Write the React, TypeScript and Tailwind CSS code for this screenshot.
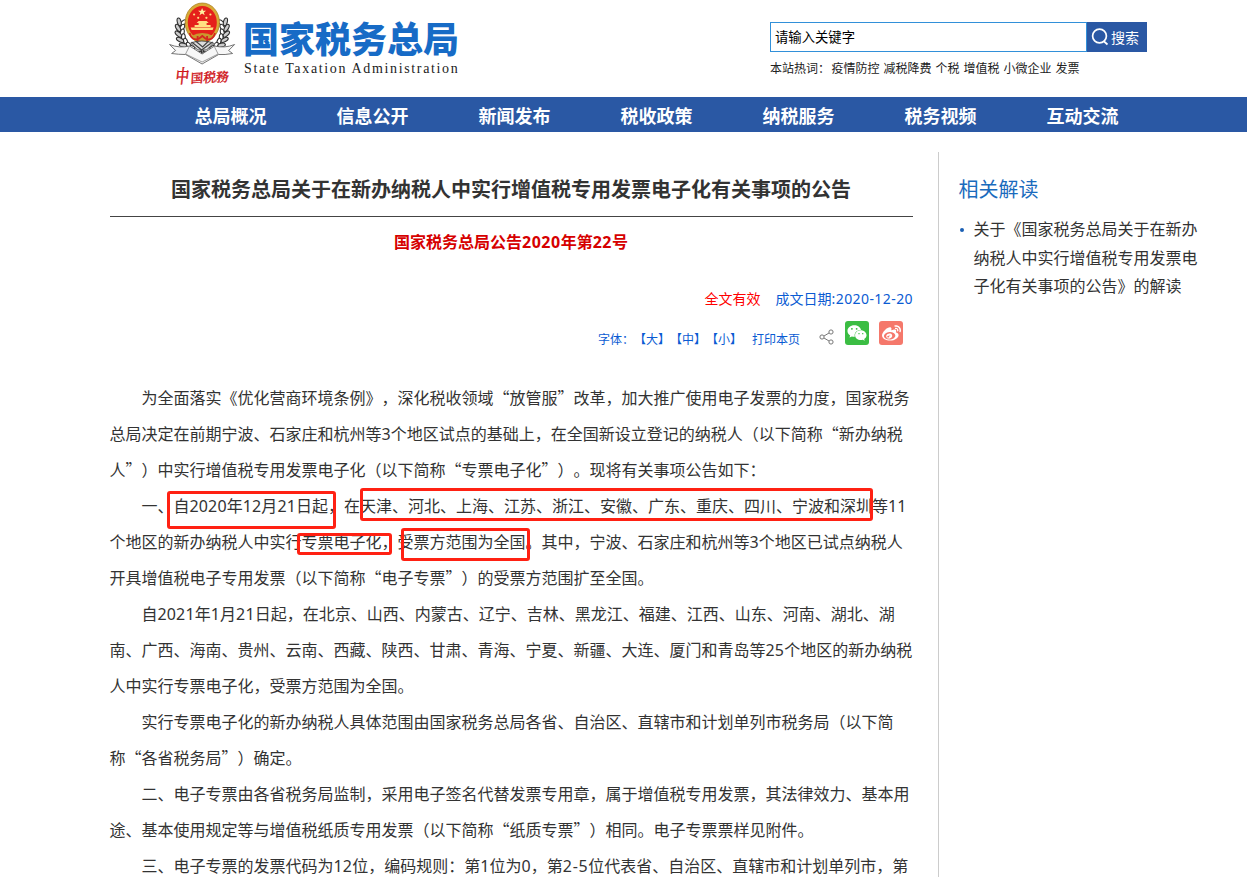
import React from "react";
import { FaWeibo, FaWeixin } from "react-icons/fa";

const navItems = ["总局概况", "信息公开", "新闻发布", "税收政策", "纳税服务", "税务视频", "互动交流"];
const hotWords = ["疫情防控", "减税降费", "个税", "增值税", "小微企业", "发票"];

const lines: { text: string; indent?: boolean }[] = [
  { text: "为全面落实《优化营商环境条例》，深化税收领域“放管服”改革，加大推广使用电子发票的力度，国家税务", indent: true },
  { text: "总局决定在前期宁波、石家庄和杭州等3个地区试点的基础上，在全国新设立登记的纳税人（以下简称“新办纳税" },
  { text: "人”）中实行增值税专用发票电子化（以下简称“专票电子化”）。现将有关事项公告如下：" },
  { text: "一、自2020年12月21日起，在天津、河北、上海、江苏、浙江、安徽、广东、重庆、四川、宁波和深圳等11", indent: true },
  { text: "个地区的新办纳税人中实行专票电子化，受票方范围为全国。其中，宁波、石家庄和杭州等3个地区已试点纳税人" },
  { text: "开具增值税电子专用发票（以下简称“电子专票”）的受票方范围扩至全国。" },
  { text: "自2021年1月21日起，在北京、山西、内蒙古、辽宁、吉林、黑龙江、福建、江西、山东、河南、湖北、湖", indent: true },
  { text: "南、广西、海南、贵州、云南、西藏、陕西、甘肃、青海、宁夏、新疆、大连、厦门和青岛等25个地区的新办纳税" },
  { text: "人中实行专票电子化，受票方范围为全国。" },
  { text: "实行专票电子化的新办纳税人具体范围由国家税务总局各省、自治区、直辖市和计划单列市税务局（以下简", indent: true },
  { text: "称“各省税务局”）确定。" },
  { text: "二、电子专票由各省税务局监制，采用电子签名代替发票专用章，属于增值税专用发票，其法律效力、基本用", indent: true },
  { text: "途、基本使用规定等与增值税纸质专用发票（以下简称“纸质专票”）相同。电子专票票样见附件。" },
  { text: "三、电子专票的发票代码为12位，编码规则：第1位为0，第2-5位代表省、自治区、直辖市和计划单列市，第", indent: true },
];

// Sets runs of digits in the Latin face, leaving the rest in the CJK one.
function Mixed({ text }: { text: string }) {
  return (
    <>
      {text.split(/([\d-]+)/).map((part, i) =>
        i % 2 === 1 ? (
          <span
            key={i}
            className={
              part.includes("-")
                ? "font-['Noto_Sans',sans-serif] leading-none tracking-[0.700px]"
                : "font-['Noto_Sans',sans-serif] leading-none tracking-[0.150px]"
            }
          >
            {part}
          </span>
        ) : (
          part
        ),
      )}
    </>
  );
}

const leaves = [0, 1, 2, 3, 4, 5, 6, 7];

function Emblem() {
  return (
    <svg className="h-[92px] w-[75px] shrink-0" viewBox="0 0 75 92">
      <g transform="translate(-.4 0)">
        {[1, -1].map((side) => (
          <g key={side} transform={side === 1 ? undefined : "translate(75.4 0) scale(-1 1)"}>
            {leaves.map((i) => {
              const t = (Math.PI * (202 - i * 14)) / 180;
              const x = 37.7 + Math.cos(t) * 22.5;
              const y = 30 + Math.sin(t) * 23;
              const a = 106 - i * 16;
              return (
                <g key={i} transform={`translate(${x} ${y}) rotate(${a})`}>
                  <ellipse cx="0" cy="-2.3" rx="4" ry="1.900" fill="#fff" stroke="#2e2e2e" strokeWidth="1.100" transform="rotate(30)" />
                  <ellipse cx="0" cy="2.3" rx="4" ry="1.900" fill="#ccc" stroke="#2e2e2e" strokeWidth="1.100" transform="rotate(-30)" />
                </g>
              );
            })}
          </g>
        ))}
        <ellipse cx="37.7" cy="22.5" rx="17.2" ry="19.5" fill="#d8aa35" stroke="#a67b20" strokeWidth=".7" />
        <ellipse cx="37.7" cy="22.5" rx="14.5" ry="16.5" fill="#e5201b" />
        <path d="M37.500 8l1.100 2.700h2.900l-2.300 1.800.9 2.800-2.600-1.700-2.600 1.700.9-2.800-2.300-1.800h2.900z" fill="#fff0a0" />
        <g fill="#ffe082">
          <circle cx="29.5" cy="14.5" r="1.1" />
          <circle cx="45.8" cy="14.5" r="1.1" />
          <circle cx="33.6" cy="17.8" r="1.1" />
          <circle cx="41.8" cy="17.8" r="1.1" />
          <path d="M32 23l2-2h8l2 2h-2v2h4v2H30v-2h4v-2z" />
          <path d="M26 27.500h23l-1 2.500H27z" />
        </g>
        <path d="M27 36q5-3 10.700-3 6 0 10.700 3l-3 5q-7.700 3-15.400 0z" fill="#c9982e" />
        <path d="M25 33q2 8 9 6l3.700-3 3.700 3q7 2 9-6M33 36v6M42.500 36v6" fill="none" stroke="#d52520" strokeWidth="1.800" />
        <path d="M26 43q11-4 23 0l-7 7h-9z" fill="#ddd" stroke="#444" strokeWidth=".9" />
        <path d="M27 42l10 8 11-8M31 41l7 6 6-6" fill="none" stroke="#444" strokeWidth="1.200" />
        <path d="M5 44.500q10 4 20 1.500l12.500 8L50 46q10 2.500 20-1.500l-6 6 4 3q-8 1.500-14 1L37.500 64 21 54.500q-7 0-14-1l4-3z" fill="#f7f7f7" stroke="#666" strokeWidth=".9" />
        <path d="M25 46l-4 8 16.500 8L53.500 54l-4-8" fill="none" stroke="#888" strokeWidth=".8" />
      </g>
      <g fill="#cf1016" stroke="#cf1016" strokeWidth=".35" fontFamily="'Noto Serif CJK SC', 'Noto Sans CJK SC', serif" fontWeight="500">
        <text fontSize="15" transform="translate(10 82.500) skewX(-6) scale(.9 1.25)">中</text>
        <text fontSize="12.500" transform="translate(25.500 83) rotate(-3) skewX(-6)">国</text>
        <text fontSize="13" transform="translate(38 82.500) rotate(-4) skewX(-8)">税</text>
        <text fontSize="13" transform="translate(50.500 82) rotate(-3) skewX(-8)">務</text>
      </g>
    </svg>
  );
}

function Header() {
  return (
    <header className="flex h-[97px] items-start pl-[165px]">
      <Emblem />
      <div className="ml-[3px] w-[221px] pt-[13px]">
        <div className="text-[36px] leading-[48px] font-black whitespace-nowrap text-[#176bc6]">国家税务总局</div>
        <div className="pl-px font-['Liberation_Serif',serif] text-[14px] leading-4 tracking-[1.650px] whitespace-nowrap text-[#222]">
          State Taxation Administration
        </div>
      </div>
      <div className="ml-[306px] pt-[22px]">
        <div className="flex h-[30px]">
          <div className="w-[317px] border border-[#3290d9] pl-[4px] text-[13.33px] leading-[27px] text-black">请输入关键字</div>
          <button className="flex w-[60px] items-center gap-[2px] bg-[#2a58a4] pl-1 text-[14px] leading-[30px] whitespace-nowrap text-white">
            <svg className="size-[18px] shrink-0" viewBox="0 0 18 18" fill="none" stroke="#fff" strokeWidth="1.700">
              <circle cx="8.500" cy="8" r="6.900" />
              <path d="M12.500 13l4 3.500" />
            </svg>
            搜索
          </button>
        </div>
        <div className="mt-[7px] flex gap-1 text-xs leading-[18px] whitespace-nowrap text-[#222]">
          <span className="-mr-[2.500px] w-[60px]">本站热词：</span>
          {hotWords.map((w) => (
            <span key={w}>{w}</span>
          ))}
        </div>
      </div>
    </header>
  );
}

function Toolbar() {
  return (
    <div className="flex h-6 justify-end pr-[10px] text-xs whitespace-nowrap text-[#0a5bd3]">
      <span className="pt-[9px] leading-[18px]">字体：【大】【中】【小】</span>
      <span className="ml-[10px] pt-[9px] leading-[18px]">打印本页</span>
      <svg className="mt-[8px] ml-[19px] size-4" viewBox="0 0 16 16" fill="none" stroke="#777" strokeWidth="1">
        <circle cx="3" cy="8" r="2.100" />
        <circle cx="12" cy="3" r="2.100" />
        <circle cx="12" cy="13" r="2.100" />
        <path d="M5 7l5-3M5 9l5 3" />
      </svg>
      <span className="ml-[10px] flex size-6 items-center justify-center rounded-[3px] bg-[#3bbd43] text-xl text-white">
        <FaWeixin />
      </span>
      <span className="ml-[10px] flex size-6 items-center justify-center rounded-[3px] bg-[#f5786b] text-[19px] text-white">
        <FaWeibo />
      </span>
    </div>
  );
}

export default function App() {
  return (
    <div className="h-[877px] w-[1247px] overflow-hidden bg-white font-['Noto_Sans_CJK_SC',sans-serif] text-[#333] [text-spacing-trim:space-all]">
      <Header />
      <nav className="flex h-[35px] bg-[#2a58a4] pl-[159.500px] text-lg leading-[36px] font-bold text-white">
        {navItems.map((item) => (
          <a key={item} className="w-[142px] text-center">
            {item}
          </a>
        ))}
      </nav>
      <div className="flex pl-[110px]">
        <main className="w-[803px] shrink-0">
          <h1 className="mt-10 h-[45px] border-b border-[#444] pr-px text-center text-xl leading-[34px] font-bold">
            国家税务总局关于在新办纳税人中实行增值税专用发票电子化有关事项的公告
          </h1>
          <div className="mt-[12px] h-6 pr-px text-center text-base leading-[24px] font-bold text-[#d60000]">
            国家税务总局公告<span className="font-['Noto_Sans',sans-serif] leading-none tracking-[0.500px]">2020</span>年第
            <span className="font-['Noto_Sans',sans-serif] leading-none tracking-[0.500px]">22</span>号
          </div>
          <div className="mt-[35px] flex h-5 justify-end gap-[15px] text-sm leading-5 whitespace-nowrap">
            <span className="text-[#f00]">全文有效</span>
            <span className="text-[#0a5bd3]">
              成文日期
              <span className="font-['Noto_Sans',sans-serif] leading-none tracking-[0.420px]">:2020-12-20</span>
            </span>
          </div>
          <div className="pt-[13px]">
            <Toolbar />
          </div>
          <article className="relative mt-[34px] text-base leading-9 whitespace-nowrap">
            {lines.map((line) => (
              <p key={line.text} className={line.indent ? "-ml-[0.500px] h-9 pl-8" : "-ml-[0.500px] h-9"}>
                <Mixed text={line.text} />
              </p>
            ))}
            <span className="absolute top-[112px] left-[57px] h-[38px] w-[169px] rounded-[3px] border-3 border-[#ff2113]" />
            <span className="absolute top-[109px] left-[250px] h-[33px] w-[513px] rounded-[3px] border-3 border-[#ff2113]" />
            <span className="absolute top-[154px] left-[187px] h-[22px] w-[95px] rounded-[3px] border-3 border-[#ff2113]" />
            <span className="absolute top-[149px] left-[291px] h-[33px] w-[129px] rounded-[3px] border-3 border-[#ff2113]" />
          </article>
        </main>
        <aside className="mt-5 ml-[25px] h-[725px] w-[270px] border-l border-[#ccc] pl-[19.500px]">
          <h2 className="pt-[21px] text-xl leading-[32px] text-[#1a6bbd]">相关解读</h2>
          <div className="mt-[9px] flex text-base leading-[28.500px] whitespace-nowrap">
            <span className="mt-[14px] mr-[10px] ml-[1px] size-1 shrink-0 rounded-full bg-[#1a5fb4]" />
            <a>
              关于《国家税务总局关于在新办
              <br />
              纳税人中实行增值税专用发票电
              <br />
              子化有关事项的公告》的解读
            </a>
          </div>
        </aside>
      </div>
    </div>
  );
}
